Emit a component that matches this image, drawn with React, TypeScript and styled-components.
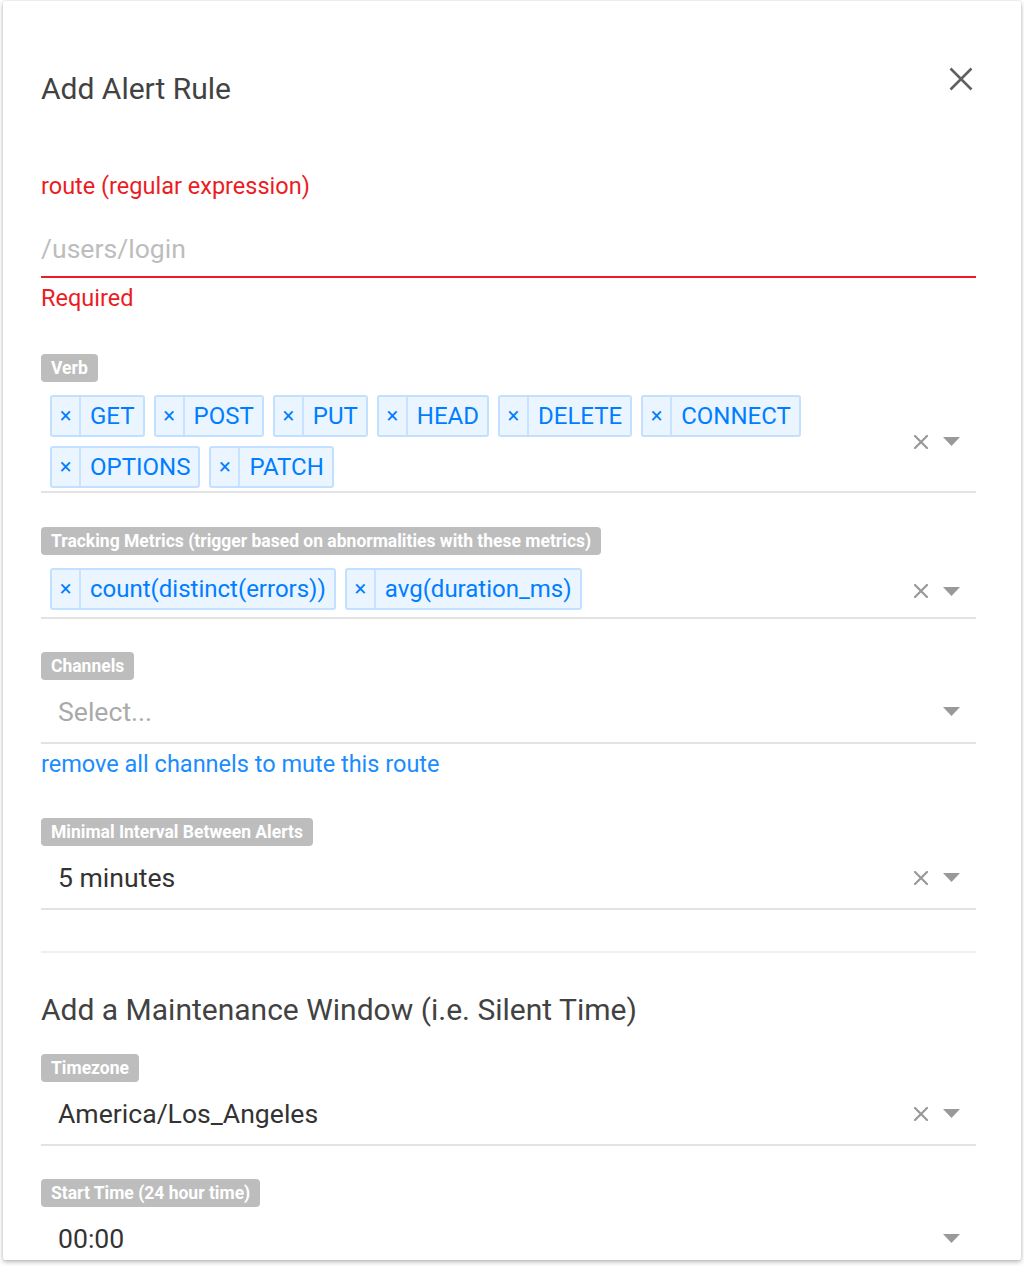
import React from 'react';
import styled, {createGlobalStyle} from 'styled-components';

const GlobalStyle = createGlobalStyle`
    html, body {
        margin: 0;
        padding: 0;
        background: #fff;
        font-family: Roboto, 'Liberation Sans', Arial, sans-serif;
    }
`;

const Page = styled.div`
    padding: 1px 3px 6px;
    box-sizing: border-box;
`;

const Dialog = styled.div`
    height: 1259px;
    overflow: hidden;
    background: #fff;
    border-radius: 2px;
    box-shadow: 0 2px 5px rgba(0, 0, 0, 0.28), 0 0 2px rgba(0, 0, 0, 0.12);
    padding: 66px 45px 0 38px;
    box-sizing: border-box;
`;

const Header = styled.div`
    display: flex;
    justify-content: space-between;
    align-items: flex-start;
`;

const Title = styled.h3`
    margin: 4px 0 0;
    font-size: 30px;
    line-height: 36px;
    font-weight: 400;
    color: #424242;
`;

const CloseButton = styled.button`
    width: 24px;
    height: 24px;
    margin-right: 3px;
    padding: 0;
    border: 0;
    background: none;
    cursor: pointer;
    display: flex;
    align-items: center;
    justify-content: center;
`;

const ErrorLabel = styled.div<{top?: number}>`
    margin-top: ${props => props.top ?? 0}px;
    font-size: 23.5px;
    line-height: 28px;
    color: #ec1c24;
`;

const TextInput = styled.input`
    display: block;
    width: 100%;
    margin-top: 32px;
    padding: 0 0 12px;
    border: 0;
    border-bottom: 2px solid #ec1c24;
    outline: none;
    background: transparent;
    font-family: inherit;
    font-size: 26.6px;
    line-height: 32px;
    height: 46px;
    color: #333;
    box-sizing: border-box;
    &::placeholder {
        color: #bdbdbd;
    }
`;

const Field = styled.div<{top: number}>`
    margin-top: ${props => props.top}px;
    line-height: 0;
`;

const FieldLabel = styled.span`
    display: inline-block;
    height: 28px;
    padding: 0 10px;
    border-radius: 4px;
    background: #bdbdbd;
    color: #fff;
    font-size: 17.5px;
    font-weight: 700;
    line-height: 28px;
    vertical-align: top;
`;

const Control = styled.div<{multi?: boolean}>`
    display: flex;
    align-items: ${props => (props.multi ? 'flex-start' : 'center')};
    min-height: 64px;
    padding: ${props => (props.multi ? '13px 0 3px' : '1px 0 0')};
    border-bottom: 2px solid #e3e3e3;
    box-sizing: border-box;
    line-height: normal;
`;

const Values = styled.div`
    flex: 1;
    display: flex;
    flex-wrap: wrap;
    column-gap: 9px;
    row-gap: 9px;
    padding-left: 9px;
`;

const SingleValue = styled.div<{placeholder?: boolean}>`
    flex: 1;
    padding-left: 17px;
    font-size: 26.6px;
    line-height: 32px;
    color: ${props => (props.placeholder ? '#aaa' : '#333')};
`;

const Tag = styled.div`
    display: flex;
    height: 42px;
    border: 2px solid #c2e0ff;
    border-radius: 3px;
    background: #ebf5ff;
    color: #007eff;
    box-sizing: border-box;
`;

const TagRemove = styled.span`
    width: 27px;
    display: flex;
    align-items: center;
    justify-content: center;
    border-right: 2px solid #c8e3ff;
    font-size: 22px;
    line-height: 1;
    cursor: pointer;
`;

const TagLabel = styled.span`
    padding: 0 8px 0 9px;
    font-size: 24px;
    line-height: 38px;
`;

const Indicators = styled.div`
    display: flex;
    align-items: center;
    gap: 15px;
    padding-right: 16px;
    align-self: center;
`;

const IndicatorSlot = styled.span`
    width: 14px;
    height: 14px;
    display: flex;
    align-items: center;
    justify-content: center;
`;

const HelpText = styled.div`
    margin-top: 6px;
    font-size: 23.5px;
    line-height: 28px;
    color: #1a8cff;
`;

const Divider = styled.hr`
    margin: 41px 0 0;
    border: 0;
    border-top: 2px solid #f0f0f0;
`;

const SectionTitle = styled.h3`
    margin: 39px 0 0;
    font-size: 30px;
    line-height: 36px;
    font-weight: 400;
    color: #424242;
`;

const ClearIcon = () => (
    <svg width="14" height="14" viewBox="0 0 14 14">
        <path d="M1 1L13 13M13 1L1 13" stroke="#999" strokeWidth="2.2" strokeLinecap="square" />
    </svg>
);

const ArrowIcon = () => (
    <svg width="17" height="9" viewBox="0 0 17 9">
        <path d="M0 0H17L8.5 9Z" fill="#999" />
    </svg>
);

const CloseIcon = () => (
    <svg width="24" height="24" viewBox="0 0 24 24">
        <path d="M1.5 1.5L22.5 22.5M22.5 1.5L1.5 22.5" stroke="#616161" strokeWidth="2.6" />
    </svg>
);

interface SelectProps {
    tags?: string[];
    value?: string;
    placeholder?: string;
    clearable?: boolean;
}

const SelectBox: React.FC<SelectProps> = ({tags, value, placeholder, clearable}) => (
    <Control multi={!!tags}>
        {tags ? (
            <Values>
                {tags.map(t => (
                    <Tag key={t}>
                        <TagRemove>×</TagRemove>
                        <TagLabel>{t}</TagLabel>
                    </Tag>
                ))}
            </Values>
        ) : (
            <SingleValue placeholder={value ? undefined : 'true'}>{value ?? placeholder}</SingleValue>
        )}
        <Indicators>
            <IndicatorSlot>{clearable && <ClearIcon />}</IndicatorSlot>
            <ArrowIcon />
        </Indicators>
    </Control>
);

const verbs = ['GET', 'POST', 'PUT', 'HEAD', 'DELETE', 'CONNECT', 'OPTIONS', 'PATCH'];
const metrics = ['count(distinct(errors))', 'avg(duration_ms)'];

export default function App() {
    return (
        <>
            <GlobalStyle />
            <Page>
                <Dialog>
                    <Header>
                        <Title>Add Alert Rule</Title>
                        <CloseButton aria-label="close">
                            <CloseIcon />
                        </CloseButton>
                    </Header>

                    <ErrorLabel top={65}>route (regular expression)</ErrorLabel>
                    <TextInput placeholder="/users/login" />
                    <ErrorLabel top={6}>Required</ErrorLabel>

                    <Field top={42}>
                        <FieldLabel>Verb</FieldLabel>
                        <SelectBox tags={verbs} clearable />
                    </Field>

                    <Field top={34}>
                        <FieldLabel>Tracking Metrics (trigger based on abnormalities with these metrics)</FieldLabel>
                        <SelectBox tags={metrics} clearable />
                    </Field>

                    <Field top={33}>
                        <FieldLabel>Channels</FieldLabel>
                        <SelectBox placeholder="Select..." />
                        <HelpText>remove all channels to mute this route</HelpText>
                    </Field>

                    <Field top={40}>
                        <FieldLabel>Minimal Interval Between Alerts</FieldLabel>
                        <SelectBox value="5 minutes" clearable />
                    </Field>

                    <Divider />
                    <SectionTitle>Add a Maintenance Window (i.e. Silent Time)</SectionTitle>

                    <Field top={26}>
                        <FieldLabel>Timezone</FieldLabel>
                        <SelectBox value="America/Los_Angeles" clearable />
                    </Field>

                    <Field top={33}>
                        <FieldLabel>Start Time (24 hour time)</FieldLabel>
                        <SelectBox value="00:00" />
                    </Field>
                </Dialog>
            </Page>
        </>
    );
}
